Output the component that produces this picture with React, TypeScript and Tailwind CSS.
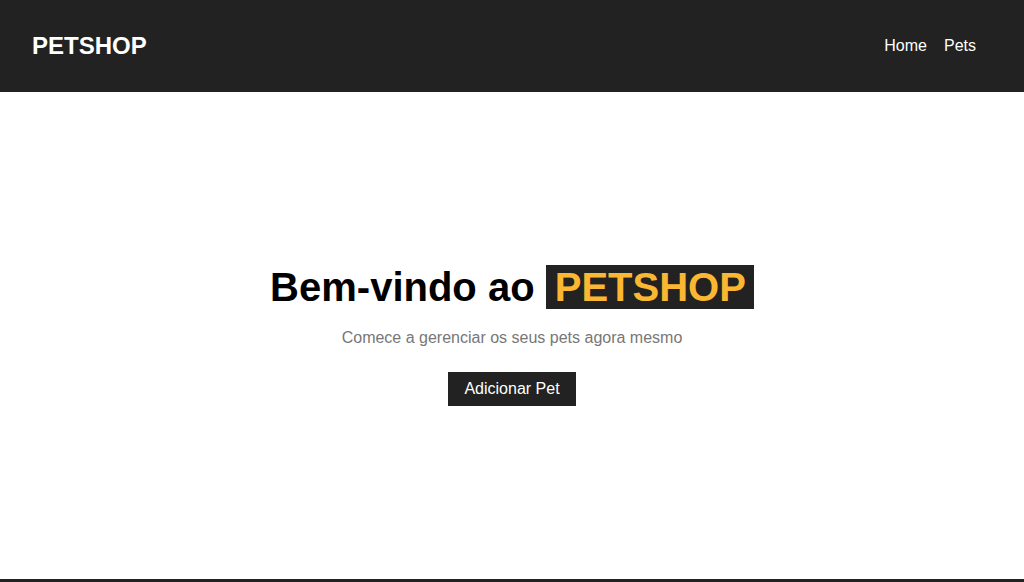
const App = () => {
  return (
    <div className="min-h-screen bg-white font-['Liberation_Sans',Arial,sans-serif]">
      {/* Header */}
      <header className="h-[92px] bg-[#222222] flex items-center justify-between pl-[32px] pr-[48px]">
        <a href="#" className="text-[24px] font-bold text-white leading-none">
          PETSHOP
        </a>
        <nav className="flex items-center gap-[17px] text-[16px] text-white">
          <a href="#">Home</a>
          <a href="#">Pets</a>
        </nav>
      </header>

      {/* Hero */}
      <main className="h-[487px] flex flex-col items-center justify-center">
        <h1 className="text-[40px] leading-[46px] font-bold text-black">
          Bem-vindo ao{" "}
          <span className="bg-[#222222] text-[#fbb731] pl-[9px] pr-[8px]">PETSHOP</span>
        </h1>
        <p className="mt-[19px] text-[16px] leading-[18px] text-[#777777]">
          Comece a gerenciar os seus pets agora mesmo
        </p>
        <button className="mt-[25px] mb-[2px] h-[34px] px-[16px] bg-[#222222] text-white text-[16px]">
          Adicionar Pet
        </button>
      </main>

      {/* Footer */}
      <footer className="h-[60px] bg-[#222222]" />
    </div>
  );
};

export default App;
